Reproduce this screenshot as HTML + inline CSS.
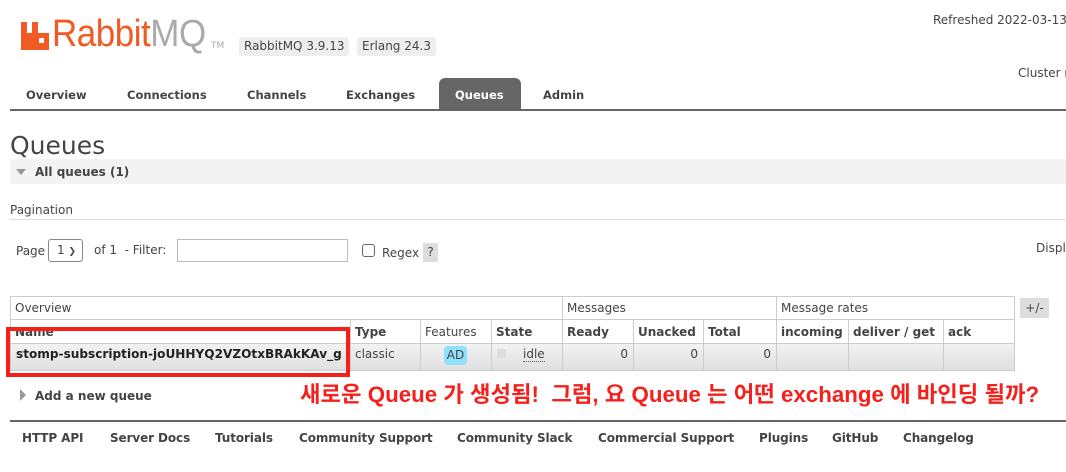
<!DOCTYPE html>
<html><head><meta charset="utf-8"><style>
*{margin:0;padding:0;box-sizing:border-box}
body{width:1066px;height:472px;overflow:hidden;background:#fff;font-family:"DejaVu Sans","Liberation Sans",sans-serif;font-size:12px;color:#444;position:relative}
.a{position:absolute;white-space:nowrap}
.b{font-weight:bold}
.nav{font-size:11.5px;font-weight:bold;color:#444;top:88px}
.ft{font-size:12px;font-weight:bold;color:#444;top:431px;letter-spacing:-0.1px}
.c{position:absolute;border-right:1px solid #ccc;border-bottom:1px solid #ccc;padding:0 5px;white-space:nowrap;overflow:hidden;font-size:12px}
</style></head><body>
<svg class="a" style="left:21px;top:22px" width="28" height="28" viewBox="0 0 28 28"><path d="M0 0h6v11h5V0h6v11h11v17H0z" fill="#f15a24"/><rect x="18" y="16" width="5" height="5" fill="#fff"/></svg>
<div class="a" style="left:52px;top:14px;font-family:'Liberation Sans',sans-serif;font-size:38px;letter-spacing:-0.5px;line-height:40px;transform:scaleX(0.92);transform-origin:0 0"><span style="color:#f15a24">Rabbit</span><span style="color:#aaa">MQ</span></div>
<div class="a" style="left:211px;top:41px;font-size:9px;color:#aaa">TM</div>
<div class="a" style="left:239px;top:37px;background:#eee;border-radius:3px;padding:1px 5px;height:19px;line-height:17px">RabbitMQ 3.9.13</div>
<div class="a" style="left:357px;top:37px;background:#eee;border-radius:3px;padding:1px 5px;height:19px;line-height:17px">Erlang 24.3</div>
<div class="a" style="left:933px;top:13px">Refreshed 2022-03-13</div>
<div class="a" style="left:1018px;top:66px">Cluster r</div>
<div class="a nav" style="left:26px">Overview</div>
<div class="a nav" style="left:127px">Connections</div>
<div class="a nav" style="left:247px">Channels</div>
<div class="a nav" style="left:346px">Exchanges</div>
<div class="a" style="left:439px;top:78px;width:82px;height:32px;background:#666;border-radius:6px 6px 0 0"></div>
<div class="a nav" style="left:455px;color:#fff">Queues</div>
<div class="a nav" style="left:543px">Admin</div>
<div class="a" style="left:10px;top:109px;width:1056px;height:2px;background:#666"></div>
<div class="a" style="left:10px;top:131px;font-size:25px;color:#444;line-height:30px">Queues</div>
<div class="a" style="left:10px;top:159px;width:1056px;height:25px;background:#f3f3f3"></div>
<svg class="a" style="left:16px;top:168px" width="10" height="8"><path d="M0 1h10L5 7z" fill="#999"/></svg>
<div class="a b" style="left:35px;top:165px">All queues (1)</div>
<div class="a" style="left:10px;top:203px">Pagination</div>
<div class="a" style="left:10px;top:219px;width:1056px;height:1px;background:#ddd"></div>
<div class="a" style="left:16px;top:244px">Page</div>
<div class="a" style="left:48px;top:239px;width:35px;height:23px;border:1px solid #888;border-radius:3px;padding:3px 0 0 8px">1 <span style="font-size:9px">&#10095;</span></div>
<div class="a" style="left:94px;top:243px">of 1 &nbsp;- Filter:</div>
<div class="a" style="left:177px;top:239px;width:171px;height:23px;border:1px solid #bbb"></div>
<div class="a" style="left:362px;top:244px;width:13px;height:13px;border:1px solid #666;border-radius:3px"></div>
<div class="a" style="left:382px;top:246px">Regex</div>
<div class="a" style="left:423px;top:243px;width:15px;height:19px;background:#ddd;text-align:center;line-height:19px">?</div>
<div class="a" style="left:1036px;top:241px">Displ</div>
<div class="a" style="left:10px;top:296px;width:1005px;height:75px;border-left:1px solid #ccc;border-top:1px solid #ccc"></div>
<div class="c" style="left:10px;top:296px;width:553px;height:24px;line-height:24px">Overview</div>
<div class="c" style="left:562px;top:296px;width:215px;height:24px;line-height:24px">Messages</div>
<div class="c" style="left:776px;top:296px;width:239px;height:24px;line-height:24px">Message rates</div>
<div class="a" style="left:1020px;top:298px;width:29px;height:20px;background:#ddd;text-align:center;line-height:20px">+/-</div>
<div class="c b" style="left:10px;top:320px;width:341px;height:24px;line-height:24px">Name</div>
<div class="c b" style="left:350px;top:320px;width:71px;height:24px;line-height:24px">Type</div>
<div class="c" style="left:420px;top:320px;width:72px;height:24px;line-height:24px">Features</div>
<div class="c b" style="left:491px;top:320px;width:72px;height:24px;line-height:24px">State</div>
<div class="c b" style="left:562px;top:320px;width:72px;height:24px;line-height:24px">Ready</div>
<div class="c b" style="left:633px;top:320px;width:71px;height:24px;line-height:24px">Unacked</div>
<div class="c b" style="left:703px;top:320px;width:74px;height:24px;line-height:24px">Total</div>
<div class="c b" style="left:776px;top:320px;width:73px;height:24px;line-height:24px">incoming</div>
<div class="c b" style="left:848px;top:320px;width:96px;height:24px;line-height:24px">deliver / get</div>
<div class="c b" style="left:943px;top:320px;width:72px;height:24px;line-height:24px">ack</div>
<div class="a" style="left:11px;top:344px;width:1003px;height:26px;background:linear-gradient(#f2f2f2,#e0e0e0)"></div>
<div class="c b" style="left:10px;top:344px;width:341px;height:27px;line-height:20px;color:#222;font-size:12.1px;padding-left:6px">stomp-subscription-joUHHYQ2VZOtxBRAkKAv_g</div>
<div class="c" style="left:350px;top:344px;width:71px;height:27px;line-height:20px">classic</div>
<div class="c" style="left:420px;top:344px;width:72px;height:27px"></div>
<div class="a" style="left:444px;top:346px;width:23px;height:19px;background:#8ee2fb;border-radius:4px;text-align:center;line-height:19px;color:#444">AD</div>
<div class="c" style="left:491px;top:344px;width:72px;height:27px"></div>
<div class="a" style="left:497px;top:349px;width:9px;height:9px;background:#ddd"></div>
<div class="a" style="left:523px;top:347px;border-bottom:1px dotted #666;line-height:14px">idle</div>
<div class="c" style="left:562px;top:344px;width:72px;height:27px;line-height:20px;text-align:right">0</div>
<div class="c" style="left:633px;top:344px;width:71px;height:27px;line-height:20px;text-align:right">0</div>
<div class="c" style="left:703px;top:344px;width:74px;height:27px;line-height:20px;text-align:right">0</div>
<div class="c" style="left:776px;top:344px;width:73px;height:27px"></div>
<div class="c" style="left:848px;top:344px;width:96px;height:27px"></div>
<div class="c" style="left:943px;top:344px;width:72px;height:27px"></div>
<div class="a" style="left:6px;top:327px;width:344px;height:50px;border:4px solid #f5201c"></div>
<svg class="a" style="left:20px;top:389px" width="6" height="12"><path d="M0 0l6 6-6 6z" fill="#999"/></svg>
<div class="a b" style="left:35px;top:389px">Add a new queue</div>
<div class="a" style="left:300px;top:381px;font-family:'Liberation Sans','Noto Sans CJK KR',sans-serif;font-weight:bold;font-size:22.3px;line-height:28px;color:#f5201c">새로운 Queue 가 생성됨! &nbsp;그럼, 요 Queue 는 어떤 exchange 에 바인딩 될까?</div>
<div class="a" style="left:10px;top:420px;width:1056px;height:2px;background:#666"></div>
<div class="a ft" style="left:22px">HTTP API</div>
<div class="a ft" style="left:110px">Server Docs</div>
<div class="a ft" style="left:215px">Tutorials</div>
<div class="a ft" style="left:299px">Community Support</div>
<div class="a ft" style="left:457px">Community Slack</div>
<div class="a ft" style="left:598px">Commercial Support</div>
<div class="a ft" style="left:759px">Plugins</div>
<div class="a ft" style="left:832px">GitHub</div>
<div class="a ft" style="left:903px">Changelog</div>
</body></html>
